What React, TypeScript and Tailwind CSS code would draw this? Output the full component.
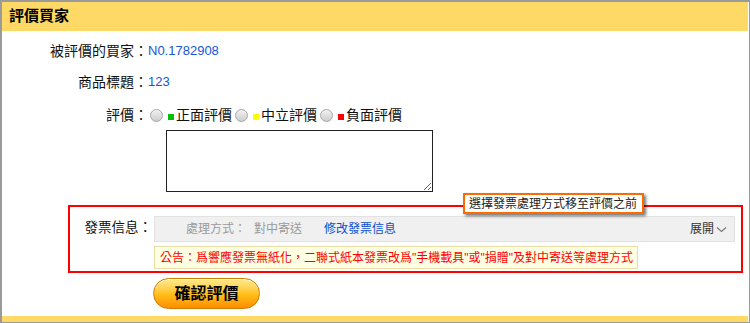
import React, { useState } from "react";

const cjk = {
  fontFamily: '"Liberation Sans", "Noto Sans CJK TC", sans-serif',
};

type Choice = "pos" | "mid" | "neg";

const choices: { key: Choice; label: string; dot: string }[] = [
  { key: "pos", label: "正面評價", dot: "bg-[#00c000]" },
  { key: "mid", label: "中立評價", dot: "bg-[#ffff00]" },
  { key: "neg", label: "負面評價", dot: "bg-[#ff0000]" },
];

const Radio = ({ checked }: { checked: boolean }) => (
  <span className="inline-flex h-[13px] w-[13px] items-center justify-center rounded-full border border-[#a8a8a8] bg-gradient-to-b from-[#f2f2f2] to-[#cdcdcd]">
    {checked && <span className="h-[5px] w-[5px] rounded-full bg-[#333]" />}
  </span>
);

export default function App() {
  const [rating, setRating] = useState<Choice | null>(null);
  const [comment, setComment] = useState("");

  return (
    <div
      className="flex h-[323px] w-[750px] flex-col border-b border-l-2 border-r border-t-2 border-[#9a9a9a] bg-white pr-px text-[14px] text-[#111]"
      style={cjk}
    >
      <div className="flex h-[29px] shrink-0 items-center bg-[#ffd966] pl-[7px] text-[15px] font-bold text-black">
        評價買家
      </div>

      <div className="mt-[10px] flex h-[20px] items-center">
        <div className="w-[146px] text-right">被評價的買家：</div>
        <div className="text-[13px] text-[#1556d8]">N0.1782908</div>
      </div>

      <div className="mt-[11px] flex h-[20px] items-center">
        <div className="w-[146px] text-right">商品標題：</div>
        <div className="text-[13px] text-[#1556d8]">123</div>
      </div>

      <div className="mt-[13px] flex h-[20px] items-center">
        <div className="w-[146px] text-right">評價：</div>
        <div className="flex items-center">
          {choices.map((c) => (
            <label
              key={c.key}
              className="flex cursor-pointer items-center pl-[2px] pr-[1px]"
              onClick={() => setRating(c.key)}
            >
              <Radio checked={rating === c.key} />
              <span className={`ml-[5px] mr-[2px] mt-[3px] h-[6px] w-[6px] ${c.dot}`} />
              <span>{c.label}</span>
            </label>
          ))}
        </div>
      </div>

      <div className="mt-[5px] pl-[164px]">
        <textarea
          value={comment}
          onChange={(e) => setComment(e.target.value)}
          className="block h-[62px] w-[267px] border border-[#222] outline-none"
        />
      </div>

      <div className="relative ml-[66px] mr-[5px] mt-[13px] h-[68px] border-2 border-[#ff0000]">
        <div className="absolute left-[393px] top-[-14px] flex h-[21px] w-[181px] items-center border-2 border-[#ff6a00] bg-white pl-[4px] text-[12px] text-[#222] shadow-[2px_2px_3px_rgba(0,0,0,0.55)]">
          選擇發票處理方式移至評價之前
        </div>
        <div className="mt-[9px] flex items-start">
          <div className="flex h-[24px] w-[82px] items-center justify-end text-[13.5px]">
            發票信息：
          </div>
          <div className="ml-[2px] mr-[6px] flex flex-1 flex-col items-start">
            <div className="flex h-[26px] w-full items-center border border-[#e2e2e2] bg-[#f0f0f0] pl-[31px] pr-[7px] text-[12px]">
              <span className="text-[#9a9a9a]">處理方式：</span>
              <span className="ml-[8px] text-[#9a9a9a]">對中寄送</span>
              <span className="ml-[22px] text-[#0b4fd0]">修改發票信息</span>
              <span className="ml-auto flex items-center text-[#333]">
                展開
                <svg width="11" height="7" viewBox="0 0 11 7" className="ml-[2px]">
                  <path d="M1 1.5 L5.5 5.5 L10 1.5" fill="none" stroke="#777" strokeWidth="1.1" />
                </svg>
              </span>
            </div>
            <div className="mt-[4px] flex h-[23px] items-center whitespace-nowrap border border-[#e9dca4] bg-[#ffffe3] pl-[5px] pr-[4px] text-[12px] text-[#ff0000]">
              公告：爲響應發票無紙化，二聯式紙本發票改爲"手機載具"或"捐贈"及對中寄送等處理方式
            </div>
          </div>
        </div>
      </div>

      <div className="mt-[5px] pl-[151px]">
        <button className="flex h-[31px] w-[107px] items-center justify-center rounded-full border border-[#cf7d00] bg-gradient-to-b from-[#ffeb8a] via-[#ffc21a] to-[#ff8c00] text-[16px] font-bold text-black shadow-[inset_0_1px_0_rgba(255,255,255,0.7)]">
          確認評價
        </button>
      </div>

      <div className="mt-auto h-[6px] bg-[#ffd966]" />
    </div>
  );
}
